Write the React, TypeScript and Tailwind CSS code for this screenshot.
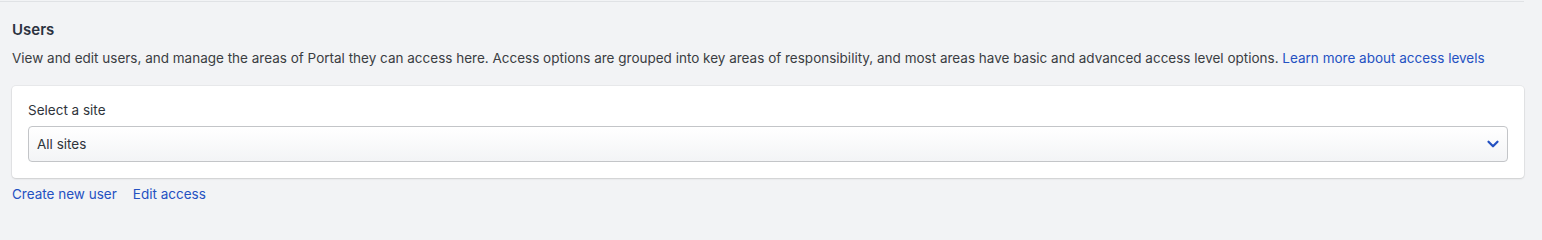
import { ChevronDown } from "lucide-react";

export default function App() {
  return (
    <div
      className="min-h-screen w-full bg-[#f2f3f5] pt-px"
      style={{ fontFamily: "Inter, 'Noto Sans', sans-serif" }}
    >
      <div className="w-[1524px] border-t border-[#e0e2e5]" />
      <div className="w-[1536px] px-3 pt-[18px]">
        <h1 className="text-[15px] font-semibold leading-5 text-[#2b3240]">Users</h1>

        <p className="mt-[8px] text-[13.5px] leading-5 text-[#3a3d42]">
          View and edit users, and manage the areas of Portal they can access here. Access options
          are grouped into key areas of responsibility, and most areas have basic and advanced
          access level options.{" "}
          <a href="#" className="text-[#2451c2]">
            Learn more about access levels
          </a>
        </p>

        {/* Site selector */}
        <div className="mt-[18px] rounded-[4px] bg-white px-4 pt-[14px] pb-4 shadow-[0_0_0_1px_rgba(0,0,0,0.04),0_1px_2px_rgba(0,0,0,0.12)]">
          <label className="block text-[13.5px] leading-5 text-[#2f343b]">Select a site</label>
          <button className="mt-[6px] flex h-9 w-full items-center justify-between rounded-[4px] border border-[#c3c5c8] bg-gradient-to-b from-white to-[#f3f4f6] pl-2 pr-[5px] text-left">
            <span className="text-[13.5px] text-[#2f343b]">All sites</span>
            <ChevronDown className="h-[18px] w-[18px] text-[#2451c2]" strokeWidth={3} />
          </button>
        </div>

        <div className="mt-[6px] flex gap-4 text-[13.5px] leading-5">
          <a href="#" className="text-[#2451c2]">
            Create new user
          </a>
          <a href="#" className="text-[#2451c2]">
            Edit access
          </a>
        </div>
      </div>
    </div>
  );
}
